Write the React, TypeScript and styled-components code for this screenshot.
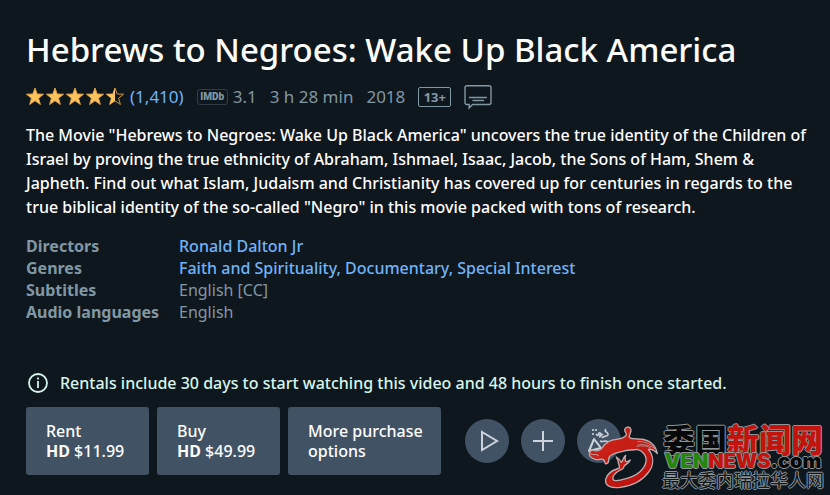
import React from "react";
import styled, { createGlobalStyle } from "styled-components";

const GlobalStyle = createGlobalStyle`
  * { box-sizing: border-box; }
  body {
    margin: 0;
    background: #0f171e;
    color: #fff;
    font: 500 16px/24px "Noto Sans", sans-serif;
  }
`;

const Page = styled.main`
  position: relative;
  min-height: 100vh;
  padding: 28px 18px 20px 26px;
  background: #0f171e;
`;

const Title = styled.h1`
  margin: 0 0 12px;
  font-size: 33px;
  line-height: 44px;
  font-weight: 500;
`;

const MetaRow = styled.div`
  display: flex;
  align-items: center;
  flex-wrap: wrap;
  gap: 13px;
  min-height: 26px;
  margin-bottom: 13px;
  color: #8197a4;
  font-size: 17px;
  font-weight: 400;
`;

const MetaGroup = styled.span`
  display: flex;
  align-items: center;
  gap: 5px;
`;

const Stars = styled.svg`
  display: block;
  width: 99px;
  height: 20px;
`;

const Link = styled.a`
  color: #6fb3f8;
  text-decoration: none;
  &:hover { text-decoration: underline; }
`;

const ImdbBadge = styled.span`
  display: grid;
  place-items: center;
  width: 31px;
  height: 16px;
  border: 1px solid #2f3d48;
  border-radius: 3px;
  color: #8197a4;
  font: 900 10px/14px "Roboto", sans-serif;
`;

const AgeBadge = styled.span`
  display: grid;
  place-items: center;
  width: 33px;
  height: 20px;
  border: 1px solid #8197a4;
  border-radius: 2px;
  font-size: 13px;
  line-height: 18px;
  font-weight: 700;
`;

const CaptionIcon = styled.svg`
  display: block;
  width: 28px;
  height: 26px;
`;

const Synopsis = styled.p`
  margin: 0 0 16px;
  max-width: 790px;
`;

const Facts = styled.dl`
  display: grid;
  grid-template-columns: 153px 1fr;
  margin: 0 0 48px;
  line-height: 22px;
  color: #8197a4;
`;

const FactLabel = styled.dt`
  font-weight: 700;
`;

const FactValue = styled.dd<{ $plain?: boolean }>`
  margin: 0;
  color: ${(p) => (p.$plain ? "#8197a4" : "#6fb3f8")};
  font-weight: ${(p) => (p.$plain ? 400 : 500)};
`;

const Notice = styled.div`
  display: flex;
  align-items: center;
  gap: 12px;
  margin-bottom: 12px;
  padding-left: 2px;
  color: #d5f6ec;
`;

const NoticeIcon = styled.svg`
  width: 20px;
  height: 20px;
`;

const Actions = styled.div`
  display: flex;
  align-items: center;
  gap: 8px;
`;

const OfferButton = styled.button<{ $wide?: boolean }>`
  width: ${(p) => (p.$wide ? 153 : 123)}px;
  height: 68px;
  padding: 0 18px 0 20px;
  border: 0;
  border-radius: 3px;
  background: #425265;
  color: #fff;
  font: inherit;
  line-height: 20px;
  text-align: left;
  cursor: pointer;
`;

const OfferLine = styled.span`
  display: block;
`;

const RoundGroup = styled.div`
  display: flex;
  gap: 12px;
  margin-left: 16px;
`;

const RoundButton = styled.button`
  display: grid;
  place-items: center;
  width: 44px;
  height: 44px;
  padding: 0;
  border: 0;
  border-radius: 50%;
  background: #425265;
  color: #ccd3da;
  cursor: pointer;
`;

const RoundIcon = styled.svg`
  width: 44px;
  height: 44px;
  fill: none;
  stroke: currentColor;
  stroke-width: 2;
`;

const Watermark = styled.div`
  position: absolute;
  right: 6px;
  bottom: 5px;
  display: flex;
  align-items: center;
  gap: 3px;
  pointer-events: none;
`;

const Dragon = styled.svg`
  width: 71px;
  height: 64px;
`;

const Wordmark = styled.div`
  display: flex;
  flex-direction: column;
  align-items: center;
  white-space: nowrap;
  --rim: #8f9496;
  text-shadow: 1px 0 var(--rim), -1px 0 var(--rim), 0 1px var(--rim), 0 -1px var(--rim);
`;

const MarkName = styled.span`
  font: 900 32px/30px "Noto Sans CJK SC", sans-serif;
`;

const MarkSite = styled.span`
  font: 900 20px/17px "Inter", sans-serif;
`;

const MarkLine = styled.span`
  padding-bottom: 1px;
  font: 400 18px/19px "Noto Sans CJK SC", sans-serif;
  color: #0f171e;
`;

const Ink = styled.span<{ $tone: "black" | "red" | "green" }>`
  color: ${(p) => ({ black: "#050708", red: "#c4120d", green: "#24870c" })[p.$tone]};
`;

const STAR = "M9 1 L11.2 7 L17.6 7.2 L12.6 11.2 L14.4 17.5 L9 13.8 L3.6 17.5 L5.4 11.2 L0.4 7.2 L6.8 7 Z";
const HALF_STAR = "M9 1 L9 13.8 L3.6 17.5 L5.4 11.2 L0.4 7.2 L6.8 7 Z";

function Rating() {
  return (
    <Stars viewBox="0 0 99 20" role="img" aria-label="4.5 out of 5 stars">
      {[0, 20, 40, 60].map((x) => (
        <path key={x} d={STAR} transform={`translate(${x} 0)`} fill="#ffc35c" stroke="#e0a445" strokeWidth=".9" />
      ))}
      <g transform="translate(80 0)">
        <path d={STAR} fill="none" stroke="#d0953a" strokeWidth="1" />
        <path d={HALF_STAR} fill="#ffc35c" />
      </g>
    </Stars>
  );
}

function DragonMark() {
  return (
    <Dragon viewBox="54 48 213 192" aria-hidden="true">
      <defs>
        <linearGradient id="scales" x1="0" y1="0" x2="1" y2="1">
          <stop offset="0" stopColor="#d02a1c" />
          <stop offset="1" stopColor="#b80c0c" />
        </linearGradient>
      </defs>
      <path
        fill="url(#scales)"
        stroke="#b9aeb0"
        strokeWidth="4"
        strokeLinejoin="round"
        d="M58 137 C57 125 67 121 76 125 C84 128 91 123 98 115 C108 99 122 92 139 91 C153 89 167 84 169 76 C170 70 163 70 164 62 C166 53 177 51 182 59 C187 68 176 77 178 84 C181 91 191 89 207 90 C238 91 258 108 262 134 C253 123 244 120 235 121 C253 143 251 168 237 188 C218 215 184 231 151 235 C125 238 104 232 107 211 C110 195 126 184 148 177 C151 168 143 166 145 158 L139 144 C148 150 151 154 154 160 C160 155 158 147 167 139 C164 151 166 157 169 159 L181 153 C177 163 169 166 163 170 C160 177 163 179 151 183 C137 190 126 202 129 211 C133 219 151 214 168 209 C201 200 224 181 228 158 C231 139 216 124 201 121 C185 124 172 122 158 127 C139 131 122 136 117 145 C115 152 119 162 110 164 C102 166 107 156 100 152 C91 147 88 154 76 151 C66 148 60 145 58 137 Z"
      />
      <path d="M202 98 C228 97 246 106 255 119 C237 107 221 105 202 108 M199 112 C216 109 233 111 243 117" fill="none" stroke="#b9aeb0" strokeWidth="2" />
      <path d="M61 134 C69 139 79 134 86 140" fill="none" stroke="#b9aeb0" strokeWidth="3" />
    </Dragon>
  );
}

export default function App() {
  return (
    <Page>
      <GlobalStyle />
      <Title>Hebrews to Negroes: Wake Up Black America</Title>
      <MetaRow>
        <MetaGroup>
          <Rating />
          <Link href="#reviews">(1,410)</Link>
        </MetaGroup>
        <MetaGroup>
          <ImdbBadge>IMDb</ImdbBadge>
          <span>3.1</span>
        </MetaGroup>
        <span>3 h 28 min</span>
        <span>2018</span>
        <AgeBadge>13+</AgeBadge>
        <CaptionIcon viewBox="0 0 28 26" fill="none" stroke="#8197a4" strokeWidth="1.4" role="img" aria-label="Subtitles available">
          <path d="M3 1.7 H25 Q27 1.7 27 3.7 V18.5 Q27 20.5 25 20.5 H8.5 L5.2 24 V20.5 H3 Q1 20.5 1 18.5 V3.7 Q1 1.7 3 1.7 Z" />
          <path d="M5 13.5 H23 M8.5 16.5 H20" />
        </CaptionIcon>
      </MetaRow>
      <Synopsis>
        The Movie "Hebrews to Negroes: Wake Up Black America" uncovers the true identity of the Children of Israel by
        proving the true ethnicity of Abraham, Ishmael, Isaac, Jacob, the Sons of Ham, Shem &amp; Japheth. Find out what
        Islam, Judaism and Christianity has covered up for centuries in regards to the true biblical identity of the
        so-called "Negro" in this movie packed with tons of research.
      </Synopsis>
      <Facts>
        <FactLabel>Directors</FactLabel>
        <FactValue><Link href="#director">Ronald Dalton Jr</Link></FactValue>
        <FactLabel>Genres</FactLabel>
        <FactValue>
          <Link href="#faith">Faith and Spirituality</Link>, <Link href="#documentary">Documentary</Link>,{" "}
          <Link href="#special">Special Interest</Link>
        </FactValue>
        <FactLabel>Subtitles</FactLabel>
        <FactValue $plain>English [CC]</FactValue>
        <FactLabel>Audio languages</FactLabel>
        <FactValue $plain>English</FactValue>
      </Facts>
      <Notice>
        <NoticeIcon viewBox="0 0 20 20" fill="none" stroke="currentColor" aria-hidden="true">
          <circle cx="10" cy="10" r="9" strokeWidth="1.8" />
          <path d="M10 8 V15 M10 4.5 V6.5" strokeWidth="1.8" />
        </NoticeIcon>
        <span>Rentals include 30 days to start watching this video and 48 hours to finish once started.</span>
      </Notice>
      <Actions>
        <OfferButton>
          <OfferLine>Rent</OfferLine>
          <OfferLine><b>HD</b> $11.99</OfferLine>
        </OfferButton>
        <OfferButton>
          <OfferLine>Buy</OfferLine>
          <OfferLine><b>HD</b> $49.99</OfferLine>
        </OfferButton>
        <OfferButton $wide>More purchase options</OfferButton>
        <RoundGroup>
          <RoundButton aria-label="Watch trailer">
            <RoundIcon viewBox="0 0 44 44"><path d="M17 13 V31 L32 22 Z" /></RoundIcon>
          </RoundButton>
          <RoundButton aria-label="Add to watchlist">
            <RoundIcon viewBox="0 0 44 44"><path d="M22 12 V32 M12 22 H32" /></RoundIcon>
          </RoundButton>
          <RoundButton aria-label="Watch party">
            <RoundIcon viewBox="0 0 44 44">
              <path d="M17 20 L12 32 L24 29 Z" strokeLinejoin="round" />
              <path d="M16 10 V12 M19 10 V12 M16 14 V16 M19 15 L21 17 M22 18 C26 17 24 13 22 14 C20 16 24 17 26 15 M29 10 C26 13 32 13 31 16 C30 18 27 16 25 19 M23 22 C27 24 27 20 31 23 M27 27 L29 25" strokeWidth="1.6" />
            </RoundIcon>
          </RoundButton>
        </RoundGroup>
      </Actions>
      <Watermark>
        <DragonMark />
        <Wordmark lang="zh-CN">
          <MarkName><Ink $tone="black">委国</Ink><Ink $tone="red">新闻网</Ink></MarkName>
          <MarkSite>
            <Ink $tone="green">VEN</Ink><Ink $tone="red">NEWS</Ink><Ink $tone="black">.com</Ink>
          </MarkSite>
          <MarkLine>最大委内瑞拉华人网</MarkLine>
        </Wordmark>
      </Watermark>
    </Page>
  );
}
